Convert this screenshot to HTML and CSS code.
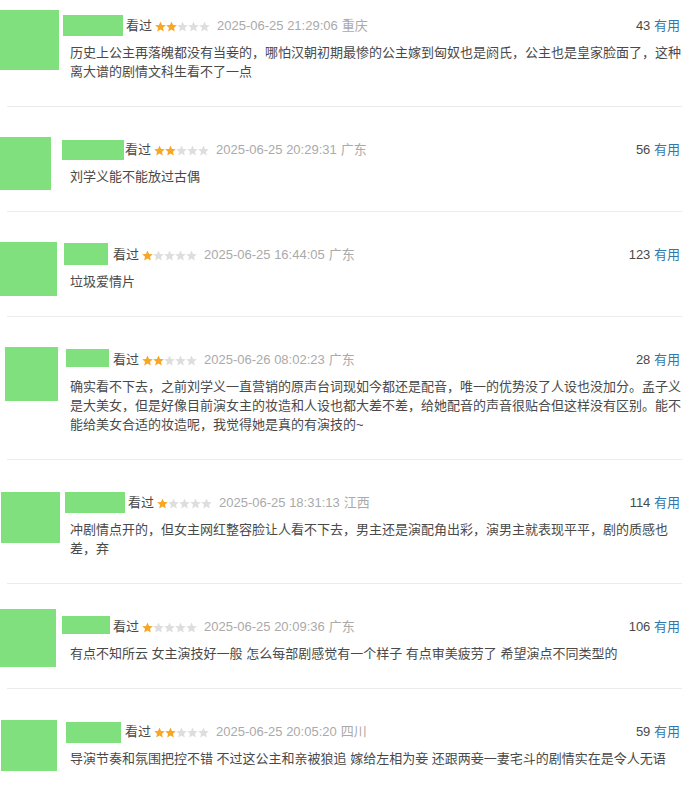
FILE: index.html
```html
<!DOCTYPE html>
<html lang="zh-CN">
<head>
    <meta charset="UTF-8">
    <meta name="viewport" content="width=device-width, initial-scale=1.0">
    <title>短评</title>
    <link rel="stylesheet" href="styles.css">
</head>
<body>
    <svg class="defs" width="0" height="0">
        <symbol id="star" viewBox="0 0 11 11">
            <polygon points="5.5,0.4 7.03,3.9 10.83,4.27 7.97,6.8 8.79,10.53 5.5,8.6 2.21,10.53 3.03,6.8 0.17,4.27 3.97,3.9"/>
        </symbol>
    </svg>

    <div class="comments">
        <!-- 1 -->
        <div class="comment-item c1">
            <div class="avatar-col"><div class="avatar"></div></div>
            <div class="comment-body">
                <div class="comment-info">
                    <span class="user-mask"></span>
                    <span class="status">看过</span>
                    <svg class="rating" viewBox="0 0 55 11"><use href="#star" x="0" width="11" height="11" class="on"/><use href="#star" x="11" width="11" height="11" class="on"/><use href="#star" x="22" width="11" height="11"/><use href="#star" x="33" width="11" height="11"/><use href="#star" x="44" width="11" height="11"/></svg>
                    <span class="comment-time">2025-06-25 21:29:06</span>
                    <span class="comment-location">重庆</span>
                    <span class="votes"><span class="vote-count">43</span> <a class="vote-link">有用</a></span>
                </div>
                <p class="short">历史上公主再落魄都没有当妾的，哪怕汉朝初期最惨的公主嫁到匈奴也是阏氏，公主也是皇家脸面了，这种离大谱的剧情文科生看不了一点</p>
            </div>
        </div>
        <div class="sep"></div>

        <!-- 2 -->
        <div class="comment-item c2">
            <div class="avatar-col"><div class="avatar"></div></div>
            <div class="comment-body">
                <div class="comment-info">
                    <span class="user-mask"></span>
                    <span class="status">看过</span>
                    <svg class="rating" viewBox="0 0 55 11"><use href="#star" x="0" width="11" height="11" class="on"/><use href="#star" x="11" width="11" height="11" class="on"/><use href="#star" x="22" width="11" height="11"/><use href="#star" x="33" width="11" height="11"/><use href="#star" x="44" width="11" height="11"/></svg>
                    <span class="comment-time">2025-06-25 20:29:31</span>
                    <span class="comment-location">广东</span>
                    <span class="votes"><span class="vote-count">56</span> <a class="vote-link">有用</a></span>
                </div>
                <p class="short">刘学义能不能放过古偶</p>
            </div>
        </div>
        <div class="sep"></div>

        <!-- 3 -->
        <div class="comment-item c3">
            <div class="avatar-col"><div class="avatar"></div></div>
            <div class="comment-body">
                <div class="comment-info">
                    <span class="user-mask"></span>
                    <span class="status">看过</span>
                    <svg class="rating" viewBox="0 0 55 11"><use href="#star" x="0" width="11" height="11" class="on"/><use href="#star" x="11" width="11" height="11"/><use href="#star" x="22" width="11" height="11"/><use href="#star" x="33" width="11" height="11"/><use href="#star" x="44" width="11" height="11"/></svg>
                    <span class="comment-time">2025-06-25 16:44:05</span>
                    <span class="comment-location">广东</span>
                    <span class="votes"><span class="vote-count">123</span> <a class="vote-link">有用</a></span>
                </div>
                <p class="short">垃圾爱情片</p>
            </div>
        </div>
        <div class="sep"></div>

        <!-- 4 -->
        <div class="comment-item c4">
            <div class="avatar-col"><div class="avatar"></div></div>
            <div class="comment-body">
                <div class="comment-info">
                    <span class="user-mask"></span>
                    <span class="status">看过</span>
                    <svg class="rating" viewBox="0 0 55 11"><use href="#star" x="0" width="11" height="11" class="on"/><use href="#star" x="11" width="11" height="11" class="on"/><use href="#star" x="22" width="11" height="11"/><use href="#star" x="33" width="11" height="11"/><use href="#star" x="44" width="11" height="11"/></svg>
                    <span class="comment-time">2025-06-26 08:02:23</span>
                    <span class="comment-location">广东</span>
                    <span class="votes"><span class="vote-count">28</span> <a class="vote-link">有用</a></span>
                </div>
                <p class="short">确实看不下去，之前刘学义一直营销的原声台词现如今都还是配音，唯一的优势没了人设也没加分。孟子义是大美女，但是好像目前演女主的妆造和人设也都大差不差，给她配音的声音很贴合但这样没有区别。能不能给美女合适的妆造呢，我觉得她是真的有演技的~</p>
            </div>
        </div>
        <div class="sep"></div>

        <!-- 5 -->
        <div class="comment-item c5">
            <div class="avatar-col"><div class="avatar"></div></div>
            <div class="comment-body">
                <div class="comment-info">
                    <span class="user-mask"></span>
                    <span class="status">看过</span>
                    <svg class="rating" viewBox="0 0 55 11"><use href="#star" x="0" width="11" height="11" class="on"/><use href="#star" x="11" width="11" height="11"/><use href="#star" x="22" width="11" height="11"/><use href="#star" x="33" width="11" height="11"/><use href="#star" x="44" width="11" height="11"/></svg>
                    <span class="comment-time">2025-06-25 18:31:13</span>
                    <span class="comment-location">江西</span>
                    <span class="votes"><span class="vote-count">114</span> <a class="vote-link">有用</a></span>
                </div>
                <p class="short">冲剧情点开的，但女主网红整容脸让人看不下去，男主还是演配角出彩，演男主就表现平平，剧的质感也差，弃</p>
            </div>
        </div>
        <div class="sep"></div>

        <!-- 6 -->
        <div class="comment-item c6">
            <div class="avatar-col"><div class="avatar"></div></div>
            <div class="comment-body">
                <div class="comment-info">
                    <span class="user-mask"></span>
                    <span class="status">看过</span>
                    <svg class="rating" viewBox="0 0 55 11"><use href="#star" x="0" width="11" height="11" class="on"/><use href="#star" x="11" width="11" height="11"/><use href="#star" x="22" width="11" height="11"/><use href="#star" x="33" width="11" height="11"/><use href="#star" x="44" width="11" height="11"/></svg>
                    <span class="comment-time">2025-06-25 20:09:36</span>
                    <span class="comment-location">广东</span>
                    <span class="votes"><span class="vote-count">106</span> <a class="vote-link">有用</a></span>
                </div>
                <p class="short">有点不知所云 女主演技好一般 怎么每部剧感觉有一个样子 有点审美疲劳了 希望演点不同类型的</p>
            </div>
        </div>
        <div class="sep"></div>

        <!-- 7 -->
        <div class="comment-item c7">
            <div class="avatar-col"><div class="avatar"></div></div>
            <div class="comment-body">
                <div class="comment-info">
                    <span class="user-mask"></span>
                    <span class="status">看过</span>
                    <svg class="rating" viewBox="0 0 55 11"><use href="#star" x="0" width="11" height="11" class="on"/><use href="#star" x="11" width="11" height="11" class="on"/><use href="#star" x="22" width="11" height="11"/><use href="#star" x="33" width="11" height="11"/><use href="#star" x="44" width="11" height="11"/></svg>
                    <span class="comment-time">2025-06-25 20:05:20</span>
                    <span class="comment-location">四川</span>
                    <span class="votes"><span class="vote-count">59</span> <a class="vote-link">有用</a></span>
                </div>
                <p class="short">导演节奏和氛围把控不错 不过这公主和亲被狼追 嫁给左相为妾 还跟两妾一妻宅斗的剧情实在是令人无语</p>
            </div>
        </div>
    </div>
</body>
</html>
```

FILE: styles.css
```css
html {
    overflow: hidden;
}
body {
    margin: 0;
    background-color: #fff;
    font-family: "Liberation Sans", Arial, "Noto Sans CJK SC", sans-serif;
    color: #494949;
}
.defs {
    position: absolute;
    width: 0;
    height: 0;
}
.comments {
    width: 692px;
}
.comment-item {
    display: flex;
    align-items: flex-start;
    padding: 33px 10px 25px 0;
}
.comment-item.c1 {
    padding-top: 16px;
}
.sep {
    height: 1px;
    margin: 0 10px 0 7px;
    background-color: #ececec;
}
/* the avatar hangs into the padding, it must not stretch the row */
.avatar-col {
    width: 62px;
    height: 20px;
    flex-shrink: 0;
}
.avatar {
    background-color: #7fe07d;
}
.comment-body {
    flex: 1;
    min-width: 0;
}
.comment-info {
    display: flex;
    align-items: center;
    height: 20px;
    font-size: 13px;
    line-height: 20px;
}
.user-mask {
    align-self: flex-start;
    background-color: #7fe07d;
}
.status {
    color: #494949;
}
.rating {
    width: 55px;
    height: 11px;
    margin: 0 7px 0 3px;
    fill: #dedede;
}
.rating .on {
    fill: #f7a626;
}
.comment-time,
.comment-location {
    color: #aaa;
}
.comment-location {
    margin-left: 4px;
}
.votes {
    margin-left: auto;
    margin-right: 2px;
    color: #494949;
}
.vote-link {
    color: #37a;
    text-decoration: none;
}
.short {
    margin: 7px 0 0 8px;
    font-size: 13px;
    line-height: 19px;
    color: #494949;
}

/* avatar / name masks, one per row */
.c1 .avatar { width: 59px; height: 60px; margin-top: -6px; }
.c2 .avatar { width: 51px; height: 53px; margin-top: -3px; }
.c3 .avatar { width: 57px; height: 54px; margin-top: -3px; }
.c4 .avatar { width: 53px; height: 54px; margin: -3px 0 0 5px; }
.c5 .avatar { width: 59px; height: 51px; margin: -1px 0 0 1px; }
.c6 .avatar { width: 56px; height: 58px; margin-top: -8px; }
.c7 .avatar { width: 56px; height: 51px; margin: -2px 0 0 1px; }

.c1 .user-mask { width: 60px; height: 21px; margin: -1px 3px 0 1px; }
.c2 .user-mask { width: 62px; height: 20px; margin: 0 1px 0 0; }
.c3 .user-mask { width: 44px; height: 22px; margin: -2px 5px 0 2px; }
.c4 .user-mask { width: 43px; height: 18px; margin: -1px 4px 0 4px; }
.c5 .user-mask { width: 60px; height: 21px; margin: -1px 3px 0 3px; }
.c6 .user-mask { width: 48px; height: 18px; margin: -1px 3px 0 0; }
.c7 .user-mask { width: 55px; height: 21px; margin: 0 4px 0 4px; }
```
